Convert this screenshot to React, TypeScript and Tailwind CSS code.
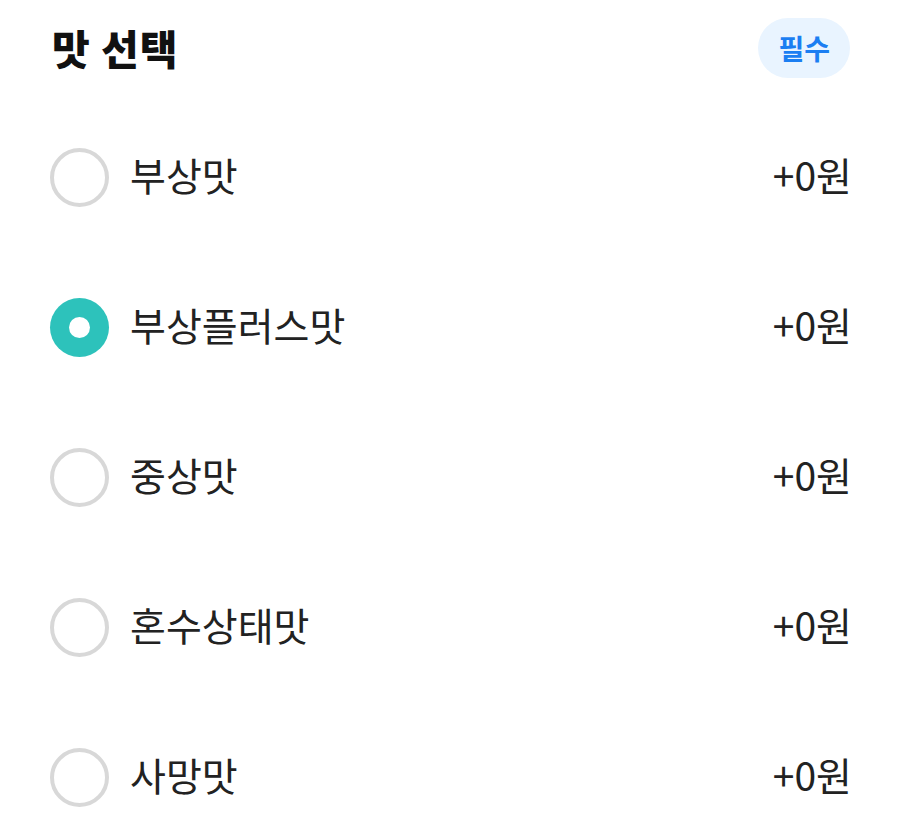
import React, { useState } from 'react';

const options = ['부상맛', '부상플러스맛', '중상맛', '혼수상태맛', '사망맛'];

const App: React.FC = () => {
  const [selected, setSelected] = useState<number>(1);

  return (
    <div
      className="min-h-screen bg-white px-[50px] pt-[18px] text-[#1f1f1f]"
      style={{ fontFamily: '"Noto Sans CJK KR", "Noto Sans", sans-serif' }}
    >
      {/* Header */}
      <div className="flex h-[60px] items-center justify-between">
        <h2 className="pl-[2px] pb-[2px] text-[41px] font-black leading-none tracking-[1px] text-[#111]">
          맛 선택
        </h2>
        <span className="flex h-[60px] items-center rounded-full bg-[#e9f4ff] px-[20px] text-[28px] font-bold text-[#1b7ef2]">
          필수
        </span>
      </div>

      {/* Options */}
      <div className="mt-[24px] flex flex-col">
        {options.map((label, index) => (
          <button
            key={label}
            onClick={() => setSelected(index)}
            className="flex h-[150px] items-center justify-between text-left"
          >
            <div className="flex items-center gap-[21px]">
              {selected === index ? (
                <span className="flex h-[59px] w-[59px] items-center justify-center rounded-full bg-[#2dc2bb]">
                  <span className="h-[21px] w-[21px] rounded-full bg-white"></span>
                </span>
              ) : (
                <span className="h-[59px] w-[59px] rounded-full border-[4px] border-[#d8d8d8]"></span>
              )}
              <span className="pb-[6px] text-[39px] leading-none text-[#222]">{label}</span>
            </div>
            <span className="-mr-[2px] pb-[6px] text-[39px] leading-none text-[#222]">+0원</span>
          </button>
        ))}
      </div>
    </div>
  );
};

export default App;
